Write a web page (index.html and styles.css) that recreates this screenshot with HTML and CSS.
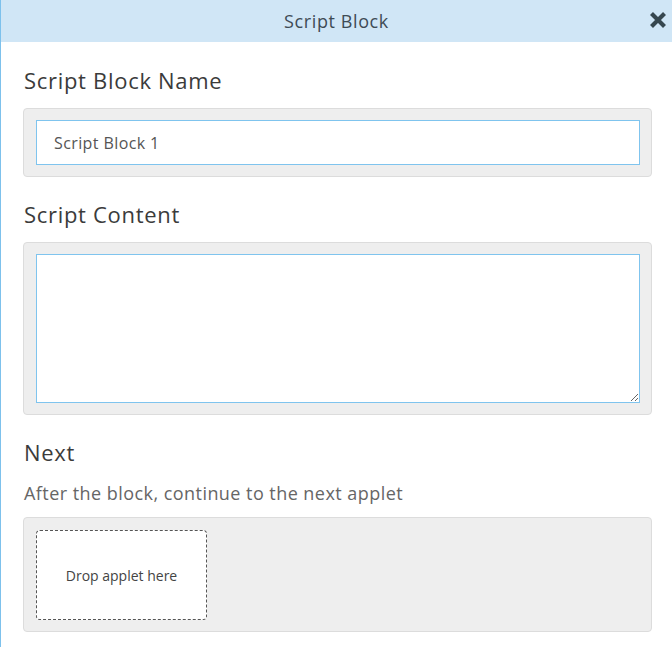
FILE: index.html
```html
<!DOCTYPE html>
<html>
<head>
<meta charset="utf-8">
<link rel="stylesheet" href="styles.css">
</head>
<body>
<div class="dialog">
  <header class="header">
    <span class="title">Script Block</span>
    <svg class="close" width="18" height="18" viewBox="0 0 18 18"><path d="M2.5 2.5 L15.5 15.5 M15.5 2.5 L2.5 15.5" stroke="#36474f" stroke-width="4.2" stroke-linecap="butt"/></svg>
  </header>
  <main class="content">
    <h2 class="label first">Script Block Name</h2>
    <div class="panel">
      <input class="field" type="text" value="Script Block 1">
    </div>
    <h2 class="label">Script Content</h2>
    <div class="panel">
      <textarea class="area"></textarea>
    </div>
    <h2 class="label next">Next</h2>
    <p class="desc">After the block, continue to the next applet</p>
    <div class="panel drop-panel">
      <div class="drop">Drop applet here</div>
    </div>
  </main>
</div>
</body>
</html>
```
FILE: styles.css
```css
* { box-sizing: border-box; }
html, body { margin: 0; padding: 0; background: #fff; }
body { font-family: "Open Sans", Lato, sans-serif; color: #3b3b3b; }
.dialog {
  width: 672px;
  height: 647px;
  border-left: 1px solid #7dc1ec;
  overflow: hidden;
}
.header {
  height: 42px;
  background: #d0e6f6;
  display: flex;
  align-items: center;
  justify-content: center;
  position: relative;
}
.title { font-size: 18px; letter-spacing: 0.6px; color: #3e4b55; }
.close { position: absolute; right: 5px; top: 11px; }
.content { padding: 0 20px 0 22px; }
.label {
  font-weight: normal;
  font-size: 22px;
  letter-spacing: 0.7px;
  margin: 23px 0 14px 1px;
  line-height: 28px;
  color: #3b3b3b;
}
.label.first { margin-top: 24px; }
.label.next { margin-top: 23px; margin-bottom: 15px; }
.panel {
  background: #eeeeee;
  border: 1px solid #dcdcdc;
  border-radius: 4px;
  padding: 11px 11px 11px 12px;
}
.field {
  display: block;
  width: 100%;
  height: 45px;
  border: 1px solid #7fc4ee;
  background: #fff;
  padding: 0 17px;
  font-family: inherit;
  font-size: 16px;
  letter-spacing: 0.4px;
  color: #555;
  outline: none;
}
.area {
  display: block;
  width: 100%;
  height: 149px;
  border: 1px solid #7fc4ee;
  background: #fff;
  resize: vertical;
  outline: none;
  font-family: inherit;
}
.desc {
  margin: 0 0 12px 1px;
  font-size: 18px;
  letter-spacing: 0.45px;
  line-height: 24px;
  color: #666;
}
.drop-panel { height: 115px; padding-top: 12px; }
.drop {
  width: 171px;
  height: 90px;
  background: #fff;
  border: 1px dashed #555;
  border-radius: 4px;
  display: flex;
  align-items: center;
  justify-content: center;
  font-size: 14px;
  color: #444;
}
```
